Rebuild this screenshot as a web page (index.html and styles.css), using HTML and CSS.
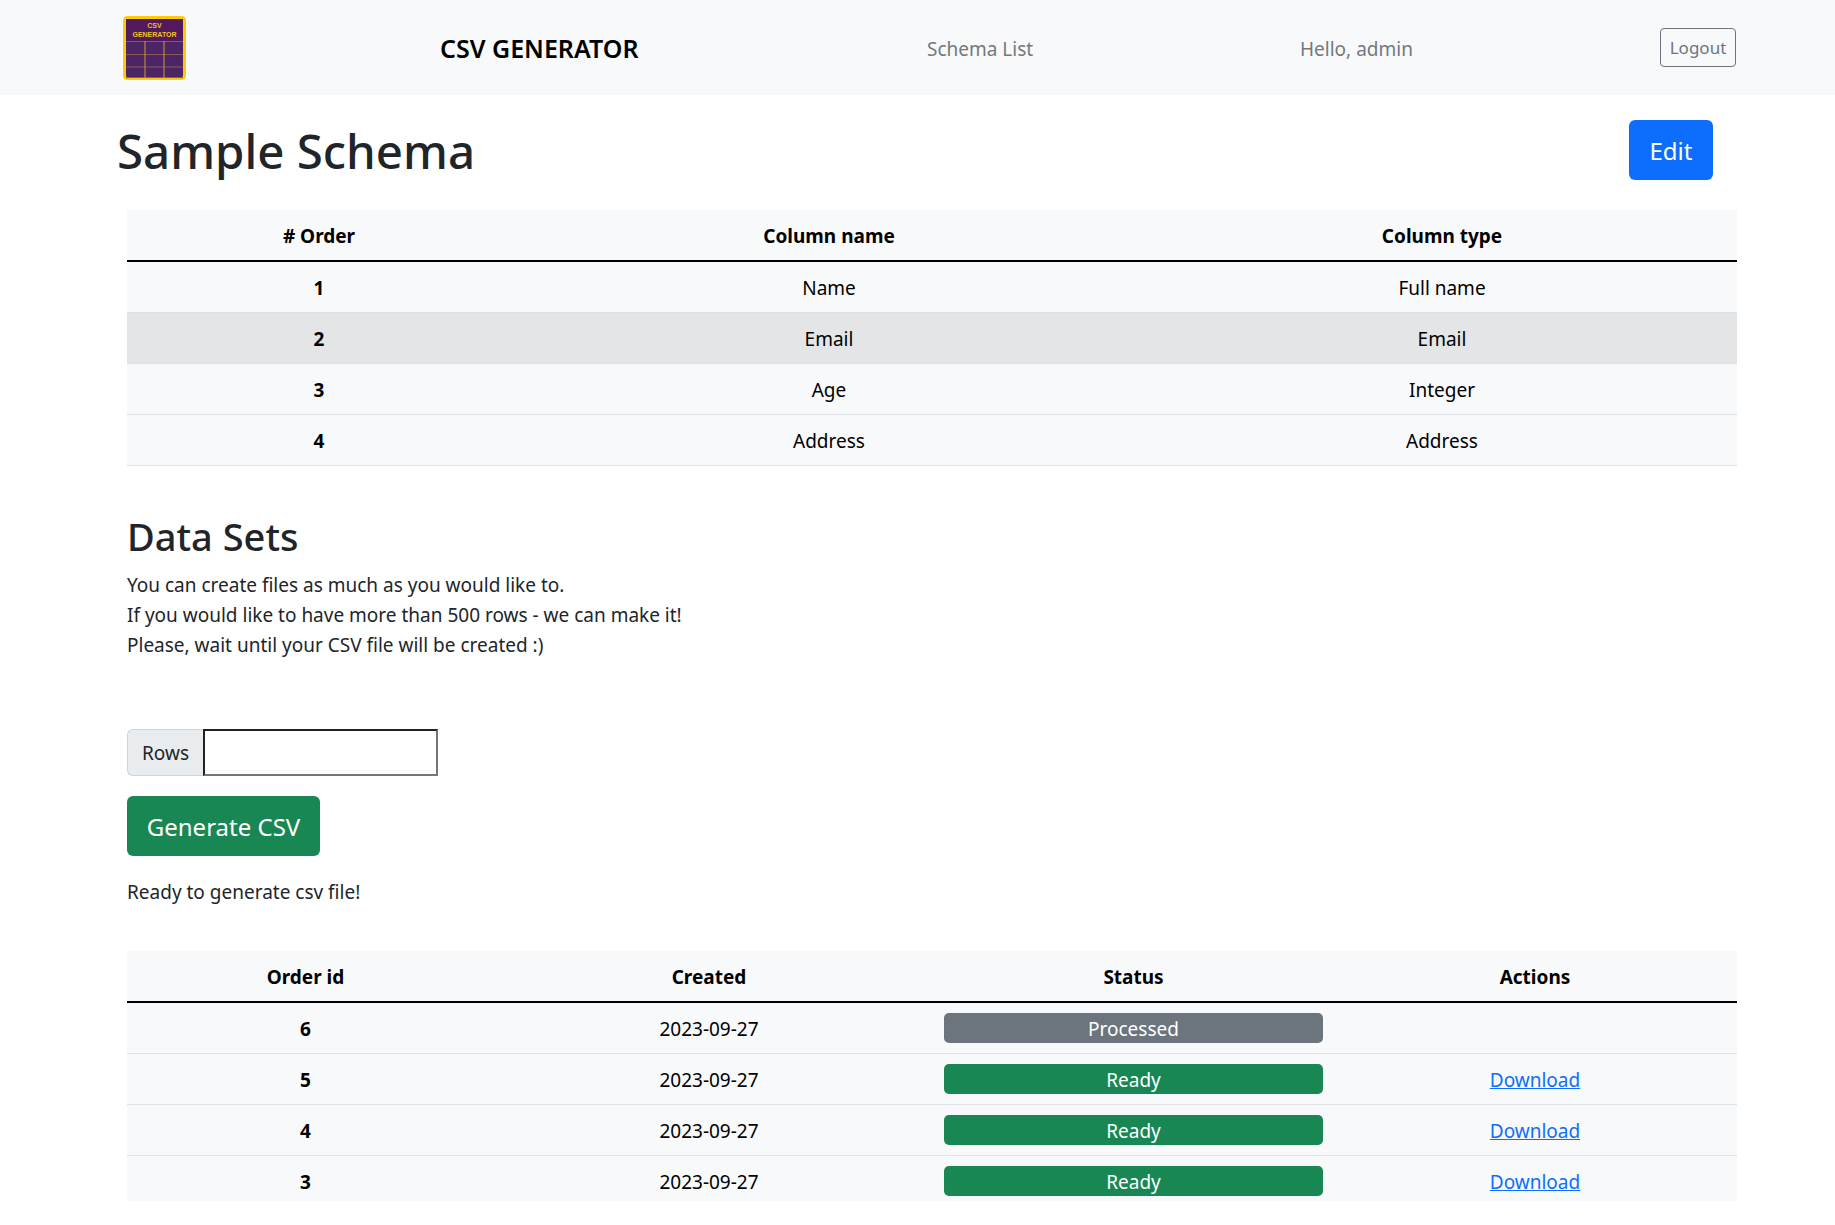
FILE: index.html
```html
<!DOCTYPE html>
<html lang="en">
<head>
<meta charset="utf-8">
<title>Sample Schema</title>
<link rel="stylesheet" href="styles.css">
</head>
<body>
<nav class="navbar">
  <a class="logo" href="#">
    <svg width="63" height="64" viewBox="0 0 63 64">
      <rect x="1.5" y="1.5" width="60" height="61" rx="3" fill="#4b2566" stroke="#fdc90c" stroke-width="3"/>
      <rect x="3" y="3" width="57" height="22" fill="#501a5c"/>
      <text x="31.5" y="12" class="logo-text">CSV</text>
      <text x="31.5" y="21" class="logo-text">GENERATOR</text>
      <path d="M3 25.5H60M3 38.5H60M3 51H60M3 61.5H60" stroke="#8a5a50" stroke-width="1" fill="none"/>
      <path d="M22 25V62M41 25V62" stroke="#d09a30" stroke-width="1" fill="none"/>
    </svg>
  </a>
  <a class="brand" href="#">CSV GENERATOR</a>
  <a class="nav-link link-schema" href="#">Schema List</a>
  <span class="nav-link link-hello">Hello, admin</span>
  <a class="logout" href="#">Logout</a>
</nav>
<main class="page">
  <header class="title-row">
    <h1>Sample Schema</h1>
    <a class="btn btn-blue" href="#">Edit</a>
  </header>
  <table class="grid schema">
    <thead>
      <tr><th class="s1"># Order</th><th class="s2">Column name</th><th class="s3">Column type</th></tr>
    </thead>
    <tbody>
      <tr><th>1</th><td>Name</td><td>Full name</td></tr>
      <tr class="hover"><th>2</th><td>Email</td><td>Email</td></tr>
      <tr><th>3</th><td>Age</td><td>Integer</td></tr>
      <tr><th>4</th><td>Address</td><td>Address</td></tr>
    </tbody>
  </table>
  <section class="sets">
    <h2>Data Sets</h2>
    <p class="intro">You can create files as much as you would like to.<br>If you would like to have more than 500 rows - we can make it!<br>Please, wait until your CSV file will be created :)</p>
    <form class="gen-form">
      <div class="input-group">
        <span class="addon">Rows</span>
        <input class="rows-input" type="text">
      </div>
      <button class="btn btn-green" type="button">Generate CSV</button>
    </form>
    <p class="ready">Ready to generate csv file!</p>
    <div class="clip">
      <table class="grid orders">
        <thead>
          <tr><th class="o1">Order id</th><th class="o2">Created</th><th class="o3">Status</th><th class="o4">Actions</th></tr>
        </thead>
        <tbody>
          <tr class="first"><th>6</th><td>2023-09-27</td><td class="status"><span class="badge badge-gray">Processed</span></td><td></td></tr>
          <tr><th>5</th><td>2023-09-27</td><td class="status"><span class="badge badge-green">Ready</span></td><td><a href="#">Download</a></td></tr>
          <tr><th>4</th><td>2023-09-27</td><td class="status"><span class="badge badge-green">Ready</span></td><td><a href="#">Download</a></td></tr>
          <tr><th>3</th><td>2023-09-27</td><td class="status"><span class="badge badge-green">Ready</span></td><td><a href="#">Download</a></td></tr>
        </tbody>
      </table>
    </div>
  </section>
</main>
</body>
</html>
```
FILE: styles.css
```css
* { box-sizing: border-box; }
html, body { margin: 0; padding: 0; }
body {
  background: #fff;
  color: #212529;
  font-family: "Noto Sans", "Open Sans", "Liberation Sans", sans-serif;
  font-size: 19px;
  line-height: 30px;
  height: 1225px;
  overflow: hidden;
}
a { color: #0d6efd; }

.navbar {
  display: flex;
  align-items: center;
  height: 95px;
  background: #f8f9fa;
  padding-left: 123px;
}
.logo { display: block; width: 63px; height: 64px; margin-right: 254px; }
.logo svg { display: block; }
.logo-text {
  font-family: "Liberation Sans", sans-serif;
  font-size: 7px;
  font-weight: 700;
  fill: #f3c21b;
  text-anchor: middle;
}
.brand {
  width: 487px;
  font-size: 25px;
  font-weight: 600;
  color: #000;
  text-decoration: none;
  white-space: nowrap;
}
.nav-link { padding-top: 2px; color: #73787d; text-decoration: none; white-space: nowrap; }
.link-schema { width: 373px; }
.link-hello { width: 360px; }
.logout {
  display: block;
  width: 76px;
  height: 39px;
  border: 1px solid #6c757d;
  border-radius: 4px;
  color: #6c757d;
  font-size: 17px;
  line-height: 37px;
  text-align: center;
  text-decoration: none;
}

.page { padding: 0 98px 0 127px; }
.title-row {
  display: flex;
  justify-content: space-between;
  align-items: flex-start;
  height: 115px;
  padding: 25px 24px 0 0;
  margin-left: -10px;
}
h1 {
  margin: 0;
  font-size: 47.4px;
  font-weight: 500;
  line-height: 62px;
}
.btn {
  display: block;
  height: 60px;
  border: 0;
  border-radius: 6px;
  color: #fff;
  font-family: inherit;
  font-size: 24px;
  line-height: 62px;
  text-align: center;
  text-decoration: none;
}
.btn-blue { width: 84px; background: #0d6efd; }
.btn-green { width: 193px; background: #198754; line-height: 60px; }

.grid {
  width: 1610px;
  border-collapse: collapse;
  table-layout: fixed;
  background: #f8f9fa;
  color: #000;
  text-align: center;
}
.grid thead th { height: 51px; padding: 11px 10px 9px; border-bottom: 2px solid #000; font-weight: 700; }
.grid tbody th, .grid tbody td {
  height: 51px;
  padding: 2px 10px 0;
  border-bottom: 1px solid #dee2e6;
  font-weight: 400;
}
.grid tbody th { font-weight: 700; }
.grid tbody .status { padding-top: 0; }
.grid tbody .first th, .grid tbody .first td { height: 52px; }
.grid tbody .first .status { padding-top: 1px; }
.hover th, .hover td { background: #e4e5e7; }
.s1 { width: 384px; }
.s2 { width: 636px; }
.s3 { width: 590px; }

.sets { padding-top: 46px; }
h2 {
  margin: 0 0 10px;
  font-size: 38px;
  font-weight: 500;
  line-height: 48px;
}
.intro { margin: 0; }
.gen-form { margin-top: 69px; }
.input-group { display: flex; height: 47px; }
.addon {
  width: 76px;
  background: #e9ecef;
  border: 1px solid #ced4da;
  border-right: 0;
  border-radius: 6px 0 0 6px;
  line-height: 47px;
  text-align: center;
}
.rows-input {
  width: 235px;
  height: 47px;
  padding: 0;
  background: #fff;
  border: 2px inset #767676;
  font: inherit;
}
.btn-green { margin-top: 20px; }
.ready { margin: 21px 0 0; }
.clip { margin-top: 44px; height: 250px; overflow: hidden; }
.o1 { width: 357px; }
.o2 { width: 450px; }
.o3 { width: 399px; }
.o4 { width: 404px; }
.badge {
  display: block;
  height: 30px;
  border-radius: 5px;
  color: #fff;
  line-height: 32px;
  font-weight: 400;
}
.badge-gray { background: #6c757d; }
.badge-green { background: #198754; }
```
